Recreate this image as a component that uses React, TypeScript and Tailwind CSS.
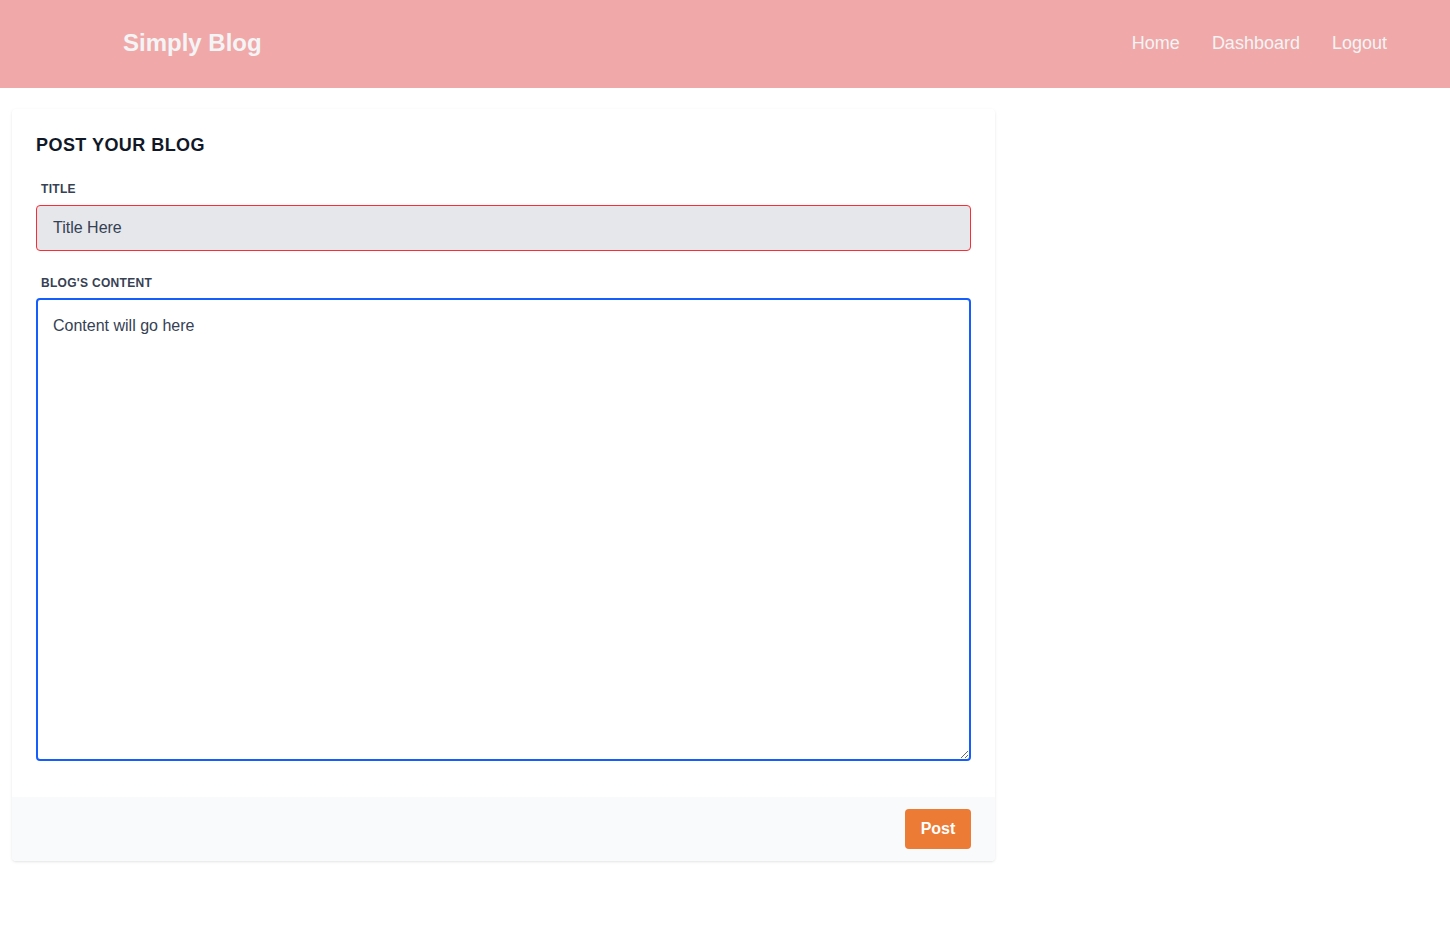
import { useState } from 'react'

export default function App() {
  const [title, setTitle] = useState('')
  const [content, setContent] = useState('')

  return (
    <div className="min-h-screen bg-white font-['Liberation_Sans',Arial,sans-serif]">
      <header className="bg-[#f0a9a8] h-[88px] flex items-center justify-between pl-[123px] pr-[63px]">
        <a href="#" className="pb-0.5 text-[24px] font-bold text-gray-100">Simply Blog</a>
        <nav className="pb-0.5 flex items-center gap-8 text-lg text-gray-100">
          <a href="#">Home</a>
          <a href="#">Dashboard</a>
          <a href="#">Logout</a>
        </nav>
      </header>

      <div className="ml-3 mt-[21px] w-[983px] bg-white rounded shadow-[0_1px_3px_0_rgba(0,0,0,0.1),0_1px_2px_-1px_rgba(0,0,0,0.06)]">
        <div className="px-6 pt-[22px] pb-9">
          <h2 className="text-lg leading-7 font-bold text-gray-900 tracking-wide uppercase">Post your blog</h2>

          <label className="block mt-[22px] mb-2 ml-[5px] text-xs leading-4 font-bold text-gray-700 uppercase tracking-wide">Title</label>
          <input
            value={title}
            onChange={(e) => setTitle(e.target.value)}
            placeholder="Title Here"
            className="block w-full h-[46px] px-4 bg-gray-200 border border-red-500 rounded text-base text-gray-700 placeholder:text-gray-700 outline-none"
          />

          <label className="block mt-6 mb-[7px] ml-[5px] text-xs leading-4 font-bold text-gray-700 uppercase tracking-wide">Blog's content</label>
          <textarea
            value={content}
            onChange={(e) => setContent(e.target.value)}
            placeholder="Content will go here"
            className="block w-full h-[463px] px-[15px] pt-[14px] pb-3 bg-white border-2 border-blue-600 rounded text-base leading-6 text-gray-700 placeholder:text-gray-700 outline-none"
          />
        </div>

        <div className="bg-gray-50 px-6 py-3 flex justify-end rounded-b">
          <button className="h-10 w-[66px] bg-[#ec7b35] text-white font-bold rounded">Post</button>
        </div>
      </div>
    </div>
  )
}
